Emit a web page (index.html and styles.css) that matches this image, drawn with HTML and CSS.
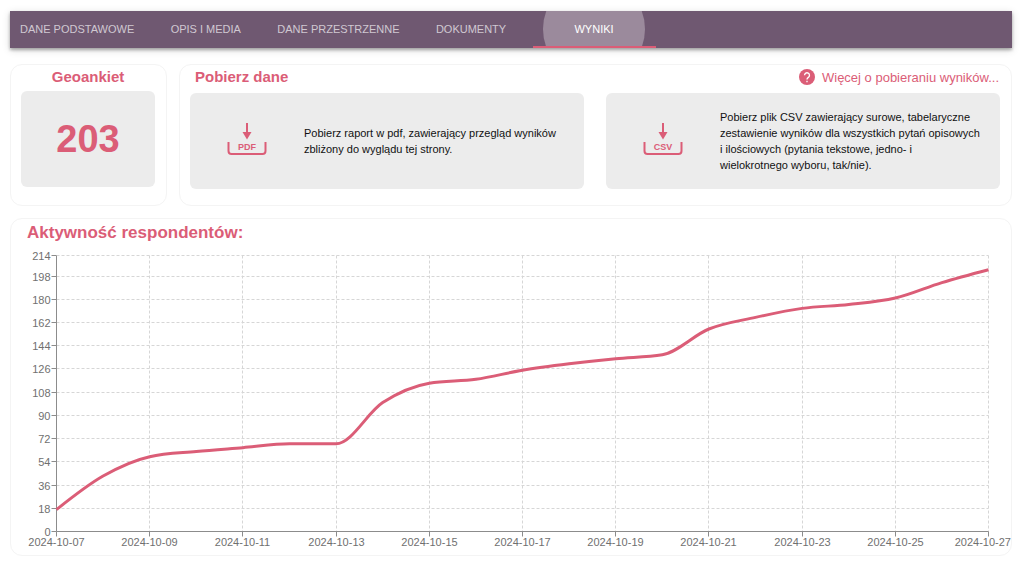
FILE: index.html
```html
<!DOCTYPE html>
<html lang="pl">
<head>
<meta charset="utf-8">
<meta name="viewport" content="width=device-width, initial-scale=1">
<title>Wyniki</title>
<link rel="stylesheet" href="styles.css">
</head>
<body>
<nav class="tabs" role="tablist" aria-label="Sekcje">
  <button class="tab" type="button" role="tab" aria-selected="false">DANE PODSTAWOWE</button>
  <button class="tab" type="button" role="tab" aria-selected="false">OPIS I MEDIA</button>
  <button class="tab" type="button" role="tab" aria-selected="false">DANE PRZESTRZENNE</button>
  <button class="tab" type="button" role="tab" aria-selected="false">DOKUMENTY</button>
  <button class="tab tab-active" type="button" role="tab" aria-selected="true"><span class="tab-label">WYNIKI</span></button>
</nav>
<main class="content">
  <div class="summary">
    <section class="card count-card">
      <h2 class="card-title">Geoankiet</h2>
      <div class="count">203</div>
    </section>
    <section class="card download-card">
      <header class="download-header">
        <h2 class="card-title">Pobierz dane</h2>
        <a class="help-link" href="#">
          <svg class="help-icon" viewBox="0 0 24 24" aria-hidden="true"><circle cx="12" cy="12" r="12"/><path d="M8.3 9.4a3.7 3.7 0 1 1 5.7 3.1c-1.3.9-2 1.500-2 3.100M12 17.600v2.200"/></svg>
          <span>Więcej o pobieraniu wyników...</span>
        </a>
      </header>
      <div class="downloads">
        <button class="download" type="button">
          <svg class="download-icon" viewBox="0 0 40 40" aria-hidden="true">
            <path class="icon-line" d="M20 2V12"/>
            <path class="icon-fill" d="M15.500 11h9L20 18.500z"/>
            <path class="icon-line" d="M1.500 21v9q0 3 3 3h31q3 0 3-3V21"/>
            <text class="icon-text" x="20" y="29">PDF</text>
          </svg>
          <span class="download-text">Pobierz raport w pdf, zawierający przegląd wyników zbliżony do wyglądu tej strony.</span>
        </button>
        <button class="download" type="button">
          <svg class="download-icon" viewBox="0 0 40 40" aria-hidden="true">
            <path class="icon-line" d="M20 2V12"/>
            <path class="icon-fill" d="M15.500 11h9L20 18.500z"/>
            <path class="icon-line" d="M1.500 21v9q0 3 3 3h31q3 0 3-3V21"/>
            <text class="icon-text" x="20" y="29">CSV</text>
          </svg>
          <span class="download-text">Pobierz plik CSV zawierający surowe, tabelaryczne zestawienie wyników dla wszystkich pytań opisowych i ilościowych (pytania tekstowe, jedno- i wielokrotnego wyboru, tak/nie).</span>
        </button>
      </div>
    </section>
  </div>
  <section class="card chart-card">
    <h2 class="chart-title">Aktywność respondentów:</h2>
    <svg class="chart" id="chart" viewBox="0 0 1000 308" role="img" aria-label="Aktywność respondentów"></svg>
  </section>
</main>
<script src="chart.js"></script>
</body>
</html>
```
FILE: styles.css
```css
* {
  box-sizing: border-box;
}

body {
  margin: 0;
  padding: 11px 12px 11px 10px;
  background: #fff;
  color: #111;
  font-family: "Liberation Sans", Arial, sans-serif;
  font-size: 11px;
}

button {
  border: 0;
  font: inherit;
  color: inherit;
  cursor: pointer;
}

.tabs {
  display: flex;
  height: 37px;
  background: #6f5871;
  box-shadow: 0 2px 3px rgba(0, 0, 0, 0.3), 0 2px 8px rgba(0, 0, 0, 0.15);
}

.tab {
  position: relative;
  min-width: 123px;
  padding: 0 10px 2px;
  overflow: hidden;
  background: none;
  color: #d0c8d1;
}

.tab-active {
  border-bottom: 2px solid #db5d77;
  padding-bottom: 0;
  color: #fff;
}

.tab-active::before {
  content: "";
  position: absolute;
  top: -33px;
  left: 10px;
  width: 102px;
  height: 102px;
  border-radius: 50%;
  background: #9b8a9c;
}

.tab-label {
  position: relative;
}

.content {
  display: grid;
  gap: 12px;
  margin-top: 16px;
}

.summary {
  display: grid;
  grid-template-columns: 157px minmax(0, 1fr);
  gap: 12px;
}

.card {
  border: 1px solid #f4f4f4;
  border-radius: 12px;
}

.card-title {
  margin: 0;
  color: #db5d77;
  font-size: 15px;
  line-height: 24px;
}

.count-card {
  padding: 0 11px 18px 10px;
  text-align: center;
}

.count {
  display: flex;
  align-items: center;
  justify-content: center;
  height: 96px;
  margin-top: 2px;
  border-radius: 6px;
  background: #ececec;
  color: #db5d77;
  font-size: 38px;
  font-weight: bold;
}

.download-card {
  padding: 0 11px 16px 10px;
}

.download-header {
  display: flex;
  align-items: center;
  justify-content: space-between;
  padding: 0 1px 0 5px;
}

.help-link {
  display: flex;
  align-items: center;
  gap: 7px;
  color: #db5d77;
  font-size: 13px;
  text-decoration: none;
}

.help-icon {
  width: 16px;
  height: 16px;
  fill: #db5d77;
}

.help-icon path {
  fill: none;
  stroke: #fff;
  stroke-width: 2;
}

.downloads {
  display: grid;
  grid-template-columns: 1fr 1fr;
  gap: 22px;
  margin-top: 4px;
}

.download {
  display: grid;
  grid-template-columns: 114px minmax(0, 1fr);
  align-items: center;
  min-height: 96px;
  padding: 0 18px 0 0;
  border-radius: 6px;
  background: #ececec;
  line-height: 16px;
  text-align: left;
}

.download-icon {
  justify-self: center;
  width: 40px;
  height: 40px;
}

.icon-line {
  fill: none;
  stroke: #db5d77;
  stroke-width: 2;
}

.icon-fill {
  fill: #db5d77;
}

.icon-text {
  fill: #db5d77;
  font-size: 9px;
  font-weight: bold;
  text-anchor: middle;
}

.chart-title {
  margin: 0;
  padding-left: 16px;
  color: #db5d77;
  font-size: 17px;
  line-height: 28px;
}

.chart {
  display: block;
  width: 100%;
  height: auto;
  overflow: visible;
}

.grid-line {
  stroke: #d6d6d6;
  stroke-dasharray: 3 2;
}

.axis {
  stroke: #8c8c8c;
}

.axis-label {
  fill: #707070;
  font-size: 11px;
}

.axis-label-y,
.axis-label-last {
  text-anchor: end;
}

.axis-label-x {
  text-anchor: middle;
}

.series {
  fill: none;
  stroke: #db5d77;
  stroke-width: 3;
}
```
FILE: chart.js
```js
const values = [17, 43, 58, 62, 65, 68, 68, 100, 115, 118, 125, 130, 134, 137, 157, 166, 173, 176, 181, 193, 203];
const yTicks = [0, 18, 36, 54, 72, 90, 108, 126, 144, 162, 180, 198, 214];
const plot = { left: 45.5, right: 977.5, top: 8.5, bottom: 284.5 };
const chart = document.getElementById("chart");

const xAt = i => plot.left + (plot.right - plot.left) * i / (values.length - 1);
const yAt = v => plot.bottom - (plot.bottom - plot.top) * v / 214;

function add(tag, className, attributes, text) {
  const node = document.createElementNS("http://www.w3.org/2000/svg", tag);
  node.setAttribute("class", className);
  for (const [name, value] of Object.entries(attributes)) node.setAttribute(name, value);
  if (text !== undefined) node.textContent = text;
  chart.appendChild(node);
}

function line(className, x1, y1, x2, y2) {
  add("line", className, { x1, y1, x2, y2 });
}

// Monotone cubic interpolation on evenly spaced points.
function monotonePath(points) {
  const step = points[1][0] - points[0][0];
  const slopes = points.slice(1).map((p, i) => (p[1] - points[i][1]) / step);
  const tangents = points.map((p, i) => {
    if (i === 0 || i === points.length - 1) return 0;
    const a = slopes[i - 1], b = slopes[i];
    return (Math.sign(a) + Math.sign(b)) * Math.min(Math.abs(a), Math.abs(b), Math.abs(a + b) / 4);
  });
  const last = points.length - 1;
  tangents[0] = (3 * slopes[0] - tangents[1]) / 2;
  tangents[last] = (3 * slopes[last - 1] - tangents[last - 1]) / 2;
  let d = `M${points[0]}`;
  for (let i = 1; i <= last; i++) {
    const [x0, y0] = points[i - 1], [x1, y1] = points[i], t = step / 3;
    d += `C${x0 + t},${y0 + t * tangents[i - 1]} ${x1 - t},${y1 - t * tangents[i]} ${x1},${y1}`;
  }
  return d;
}

for (const v of yTicks) {
  const y = Math.floor(yAt(v)) + 0.5;
  if (v > 0) line("grid-line", plot.left, y, plot.right, y);
  line("axis", plot.left - 5, y, plot.left, y);
  add("text", "axis-label axis-label-y", { x: plot.left - 6, y: y + 4 }, v);
}

for (let i = 0; i < values.length; i += 2) {
  const x = Math.floor(xAt(i)) + 0.5;
  const isLast = i === values.length - 1;
  line("grid-line", x, plot.top, x, plot.bottom);
  line("axis", x, plot.bottom, x, plot.bottom + 5);
  add("text", `axis-label ${isLast ? "axis-label-last" : "axis-label-x"}`,
    { x: isLast ? 1000 : x, y: 299 }, `2024-10-${String(7 + i).padStart(2, "0")}`);
}

line("axis", plot.left, plot.top, plot.left, plot.bottom);
line("axis", plot.left, plot.bottom, plot.right, plot.bottom);
add("path", "series", { d: monotonePath(values.map((v, i) => [xAt(i), yAt(v)])) });
```
